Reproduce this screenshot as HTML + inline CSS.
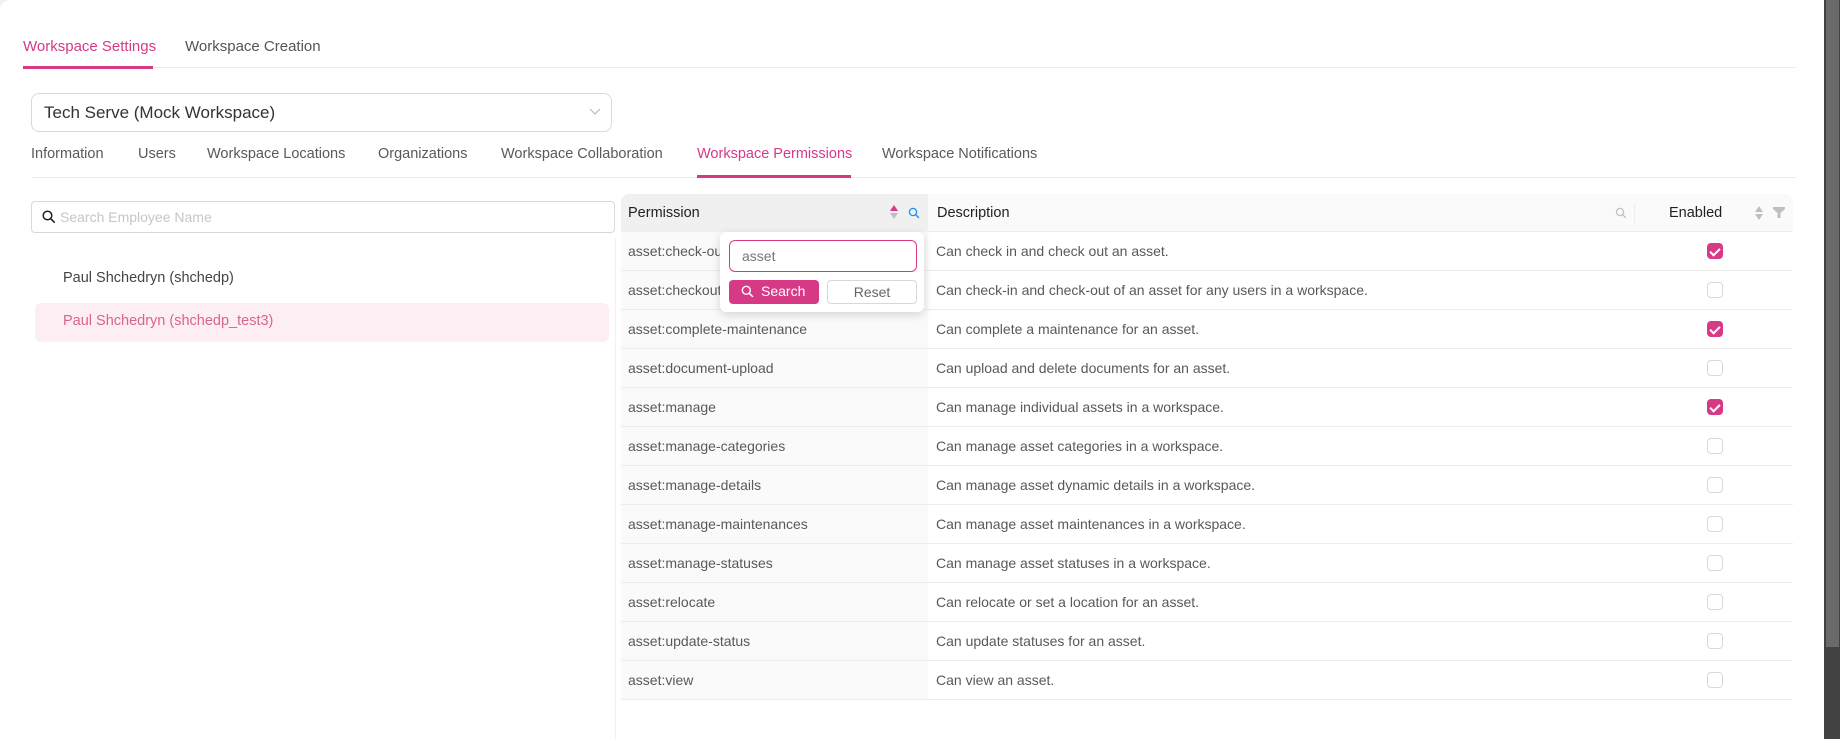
<!DOCTYPE html>
<html><head><meta charset="utf-8"><style>
*{box-sizing:border-box;margin:0;padding:0}
body{width:1840px;height:739px;overflow:hidden;background:#f0f0f0;font-family:"Liberation Sans",sans-serif;color:#595959;font-size:14px;position:relative}
.card{position:absolute;left:0;top:0;width:1824px;height:739px;background:#fff;border-radius:10px 0 0 0}
.a{position:absolute;white-space:nowrap}
.sb{position:absolute;left:1824px;top:0;width:16px;height:739px;background:#424242}
.th{position:absolute;left:1826px;top:0;width:13px;height:647px;background:#6a6a6a}
.row{position:absolute;left:621px;width:1172px;height:39px;border-bottom:1px solid #ececec}
.row .p{position:absolute;left:0;top:0;width:307px;height:38px;background:#fafafa;padding:11px 7px}
.row .d{position:absolute;left:315px;top:11px}
.cb{position:absolute;left:1086px;top:11px;width:16px;height:16px;border:1px solid #d9d9d9;border-radius:4px;background:#fff}
.cb.on{background:#d63a86;border-color:#d63a86}
</style></head><body>
<div class="card"></div>
<div class="a" style="left:23px;top:38px;font-size:15px;color:#d63a86">Workspace Settings</div>
<div class="a" style="left:185px;top:38px;font-size:15px;color:#555">Workspace Creation</div>
<div class="a" style="left:23px;top:67px;width:1773px;height:1px;background:#ececec"></div>
<div class="a" style="left:23px;top:66px;width:130px;height:3px;background:#d63a86"></div>

<div class="a" style="left:31px;top:93px;width:581px;height:39px;border:1px solid #d9d9d9;border-radius:8px;padding:9px 12px;font-size:17px;color:#333">Tech Serve (Mock Workspace)<svg style="position:absolute;right:10px;top:14px" width="12" height="8" viewBox="0 0 12 8"><path d="M1 1l5 5 5-5" fill="none" stroke="#bbb" stroke-width="1.2"/></svg></div>

<div class="a" style="left:31px;top:146px;font-size:14.5px">Information</div>
<div class="a" style="left:138px;top:146px;font-size:14.5px">Users</div>
<div class="a" style="left:207px;top:146px;font-size:14.5px">Workspace Locations</div>
<div class="a" style="left:378px;top:146px;font-size:14.5px">Organizations</div>
<div class="a" style="left:501px;top:146px;font-size:14.5px">Workspace Collaboration</div>
<div class="a" style="left:697px;top:146px;font-size:14.5px;color:#d63a86">Workspace Permissions</div>
<div class="a" style="left:882px;top:146px;font-size:14.5px">Workspace Notifications</div>
<div class="a" style="left:31px;top:177px;width:1765px;height:1px;background:#ececec"></div>
<div class="a" style="left:697px;top:175px;width:154px;height:3px;background:#d63a86"></div>

<div class="a" style="left:31px;top:201px;width:584px;height:32px;border:1px solid #d9d9d9;border-radius:4px;padding:7px 10px 0 28px;color:#c6c6c6;font-size:14px">Search Employee Name<svg style="position:absolute;left:10px;top:8px" width="14" height="14" viewBox="0 0 14 14"><circle cx="5.5" cy="5.5" r="4.3" fill="none" stroke="#222" stroke-width="1.5"/><path d="M8.7 8.7l4 4" stroke="#222" stroke-width="1.6"/></svg></div>
<div class="a" style="left:63px;top:270px;font-size:14.5px;color:#444">Paul Shchedryn (shchedp)</div>
<div class="a" style="left:35px;top:303px;width:574px;height:39px;background:#fdeef3;border-radius:6px"></div>
<div class="a" style="left:63px;top:313px;font-size:14.5px;color:#d9658f">Paul Shchedryn (shchedp_test3)</div>
<div class="a" style="left:615px;top:238px;width:1px;height:501px;background:#f0f0f0"></div>

<div class="a" style="left:621px;top:194px;width:1172px;height:38px;background:#fafafa;border-radius:8px 8px 0 0;border-bottom:1px solid #ececec"></div>
<div class="a" style="left:621px;top:194px;width:307px;height:38px;background:#f0f0f0;border-radius:8px 0 0 0"></div>
<div class="a" style="left:628px;top:205px;font-size:14.5px;color:#222">Permission</div>
<svg class="a" style="left:889px;top:204px" width="10" height="16" viewBox="0 0 10 16"><path d="M5 1l4 6H1z" fill="#d63a86"/><path d="M5 15l4-6H1z" fill="#bfbfbf"/></svg>
<svg class="a" style="left:908px;top:207px" width="12" height="12" viewBox="0 0 12 12"><circle cx="5" cy="5" r="3.6" fill="none" stroke="#1890ff" stroke-width="1.3"/><path d="M7.6 7.6l3.3 3.3" stroke="#1890ff" stroke-width="1.4"/></svg>
<div class="a" style="left:937px;top:205px;font-size:14.5px;color:#222">Description</div>
<svg class="a" style="left:1615px;top:207px" width="12" height="12" viewBox="0 0 12 12"><circle cx="5" cy="5" r="3.6" fill="none" stroke="#bfbfbf" stroke-width="1.2"/><path d="M7.6 7.6l3.3 3.3" stroke="#bfbfbf" stroke-width="1.3"/></svg>
<div class="a" style="left:1634px;top:203px;width:1px;height:22px;background:#eee"></div>
<div class="a" style="left:1669px;top:205px;font-size:14.5px;color:#222">Enabled</div>
<svg class="a" style="left:1754px;top:205px" width="10" height="16" viewBox="0 0 10 16"><path d="M5 1l4 6H1z" fill="#bfbfbf"/><path d="M5 15l4-6H1z" fill="#bfbfbf"/></svg>
<svg class="a" style="left:1773px;top:207px" width="12" height="11" viewBox="0 0 12 11"><path d="M0 0h12v2L7.5 6v5h-3V6L0 2z" fill="#bfbfbf"/></svg>

<div class="row" style="top:232px"><div class="p">asset:check-out</div><div class="d">Can check in and check out an asset.</div><div class="cb on"></div></div>
<div class="row" style="top:271px"><div class="p">asset:checkout</div><div class="d">Can check-in and check-out of an asset for any users in a workspace.</div><div class="cb"></div></div>
<div class="row" style="top:310px"><div class="p">asset:complete-maintenance</div><div class="d">Can complete a maintenance for an asset.</div><div class="cb on"></div></div>
<div class="row" style="top:349px"><div class="p">asset:document-upload</div><div class="d">Can upload and delete documents for an asset.</div><div class="cb"></div></div>
<div class="row" style="top:388px"><div class="p">asset:manage</div><div class="d">Can manage individual assets in a workspace.</div><div class="cb on"></div></div>
<div class="row" style="top:427px"><div class="p">asset:manage-categories</div><div class="d">Can manage asset categories in a workspace.</div><div class="cb"></div></div>
<div class="row" style="top:466px"><div class="p">asset:manage-details</div><div class="d">Can manage asset dynamic details in a workspace.</div><div class="cb"></div></div>
<div class="row" style="top:505px"><div class="p">asset:manage-maintenances</div><div class="d">Can manage asset maintenances in a workspace.</div><div class="cb"></div></div>
<div class="row" style="top:544px"><div class="p">asset:manage-statuses</div><div class="d">Can manage asset statuses in a workspace.</div><div class="cb"></div></div>
<div class="row" style="top:583px"><div class="p">asset:relocate</div><div class="d">Can relocate or set a location for an asset.</div><div class="cb"></div></div>
<div class="row" style="top:622px"><div class="p">asset:update-status</div><div class="d">Can update statuses for an asset.</div><div class="cb"></div></div>
<div class="row" style="top:661px"><div class="p">asset:view</div><div class="d">Can view an asset.</div><div class="cb"></div></div>

<div class="a" style="left:720px;top:232px;width:204px;height:80px;background:#fff;border-radius:6px;box-shadow:0 3px 10px rgba(0,0,0,.15)"></div>
<div class="a" style="left:729px;top:240px;width:188px;height:32px;border:1px solid #d63a86;border-radius:6px;padding:7px 12px;color:#777;font-size:14px">asset</div>
<div class="a" style="left:729px;top:280px;width:90px;height:24px;background:#d63a86;border-radius:4px;color:#fff;font-size:14px;padding:3px 0 0 32px">Search<svg style="position:absolute;left:12px;top:5px" width="13" height="13" viewBox="0 0 13 13"><circle cx="5.3" cy="5.3" r="4" fill="none" stroke="#fff" stroke-width="1.4"/><path d="M8.3 8.3l3.6 3.6" stroke="#fff" stroke-width="1.5"/></svg></div>
<div class="a" style="left:827px;top:280px;width:90px;height:24px;border:1px solid #d9d9d9;border-radius:4px;color:#666;font-size:14px;text-align:center;padding-top:3px">Reset</div>

<div class="sb"></div><div class="th"></div>
<style>.cb.on::after{content:"";position:absolute;left:4px;top:2px;width:4px;height:8px;border:solid #fff;border-width:0 2px 2px 0;transform:rotate(45deg)}</style>
</body></html>
